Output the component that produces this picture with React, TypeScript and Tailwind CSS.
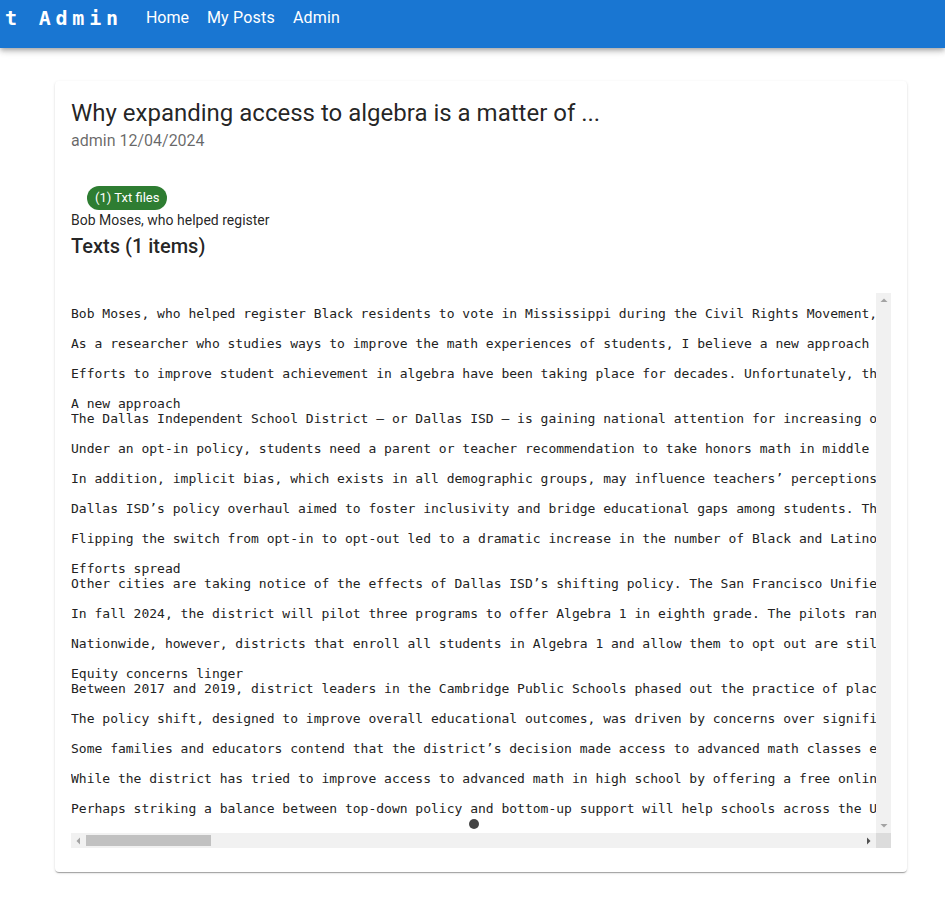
import React from "react";

const lines = [
  "Bob Moses, who helped register Black residents to vote in Mississippi during the Civil Rights Movement, believed civil rights went beyond the ballot. To him, math literacy was the new civil right.",
  "",
  "As a researcher who studies ways to improve the math experiences of students, I believe a new approach that makes algebra accessible to all students is needed.",
  "",
  "Efforts to improve student achievement in algebra have been taking place for decades. Unfortunately, the results have been mixed, and gaps persist for Black and Latino students.",
  "",
  "A new approach",
  "The Dallas Independent School District — or Dallas ISD — is gaining national attention for increasing opportunities for students to take Algebra 1 in middle school.",
  "",
  "Under an opt-in policy, students need a parent or teacher recommendation to take honors math in middle school, which often leads to fewer Black and Latino students enrolling.",
  "",
  "In addition, implicit bias, which exists in all demographic groups, may influence teachers’ perceptions of which students are ready for advanced coursework.",
  "",
  "Dallas ISD’s policy overhaul aimed to foster inclusivity and bridge educational gaps among students. The district automatically enrolls students who score well on state tests.",
  "",
  "Flipping the switch from opt-in to opt-out led to a dramatic increase in the number of Black and Latino students enrolled in advanced math classes.",
  "",
  "Efforts spread",
  "Other cities are taking notice of the effects of Dallas ISD’s shifting policy. The San Francisco Unified School District, for example, is reconsidering its approach to eighth grade algebra.",
  "",
  "In fall 2024, the district will pilot three programs to offer Algebra 1 in eighth grade. The pilots range from offering the course during the school day to summer sessions.",
  "",
  "Nationwide, however, districts that enroll all students in Algebra 1 and allow them to opt out are still relatively rare, and the results remain under study.",
  "",
  "Equity concerns linger",
  "Between 2017 and 2019, district leaders in the Cambridge Public Schools phased out the practice of placing students into different math classes based on perceived ability.",
  "",
  "The policy shift, designed to improve overall educational outcomes, was driven by concerns over significant racial disparities in who took advanced math in middle school.",
  "",
  "Some families and educators contend that the district’s decision made access to advanced math classes even more unequal, since families with resources turned to private tutoring.",
  "",
  "While the district has tried to improve access to advanced math in high school by offering a free online course, critics say the change has not gone far enough.",
  "",
  "Perhaps striking a balance between top-down policy and bottom-up support will help schools across the U.S. make algebra accessible to every student who wants to learn it.",
];

function Arrow({ dir, color }: { dir: "up" | "down" | "left" | "right"; color: string }) {
  const pts = {
    up: "4,1.5 7.5,5 0.5,5",
    down: "0.5,2 7.5,2 4,5.5",
    left: "5,0.5 5,7.5 1.5,4",
    right: "2,0.5 2,7.5 5.5,4",
  }[dir];
  return (
    <svg width="8" height="8" viewBox="0 0 8 8">
      <polygon points={pts} fill={color} />
    </svg>
  );
}

function NavBar() {
  return (
    <header className="h-12 bg-[#1976d2] text-white shadow-[0_2px_4px_-1px_rgba(0,0,0,0.2),0_4px_5px_0_rgba(0,0,0,0.14),0_1px_10px_0_rgba(0,0,0,0.12)]">
      <div className="flex items-start pt-[6px] pl-[5px]">
        <span className="font-['DejaVu_Sans_Mono',monospace] text-[20px] font-bold tracking-[0.3rem] leading-6 whitespace-pre mr-[24px]">
          t Admin
        </span>
        <nav className="flex font-['Roboto',sans-serif] text-[16px] leading-6">
          <span className="ml-[-1px] w-[61px]">Home</span>
          <span className="w-[86px] tracking-[0.2px]">My Posts</span>
          <span className="tracking-[0.2px]">Admin</span>
        </nav>
      </div>
    </header>
  );
}

function TextViewer() {
  return (
    <div className="mt-[31px] grid grid-cols-[805px_15px] grid-rows-[540px_15px]">
      <div className="overflow-hidden">
        <div className="w-[4990px]">
          <pre className="mt-[13px] font-['DejaVu_Sans_Mono',monospace] text-[13px] leading-[15px] text-[#222]">
            {lines.join("\n")}
          </pre>
          <div className="flex w-[805px] justify-center pt-[3px]">
            <span className="h-[10px] w-[10px] rounded-full bg-[#444]" />
          </div>
        </div>
      </div>
      {/* vertical scrollbar, nothing to scroll */}
      <div className="flex flex-col justify-between bg-[#f1f1f1]">
        <div className="flex h-[15px] items-center justify-center">
          <Arrow dir="up" color="#a3a3a3" />
        </div>
        <div className="flex h-[15px] items-center justify-center">
          <Arrow dir="down" color="#a3a3a3" />
        </div>
      </div>
      {/* horizontal scrollbar */}
      <div className="flex items-center bg-[#f1f1f1]">
        <div className="flex h-[15px] w-[15px] items-center justify-center">
          <Arrow dir="left" color="#a3a3a3" />
        </div>
        <div className="flex-1">
          <div className="h-[11px] w-[125px] bg-[#c1c1c1]" />
        </div>
        <div className="flex h-[15px] w-[15px] items-center justify-center">
          <Arrow dir="right" color="#505050" />
        </div>
      </div>
      <div className="bg-[#dcdcdc]" />
    </div>
  );
}

export default function App() {
  return (
    <div className="min-h-[917px] bg-white font-['Roboto',sans-serif] text-[rgba(0,0,0,0.87)]">
      <NavBar />
      <main className="pl-[55px] pr-[38px] pt-[33px] pb-[45px]">
        <div className="rounded bg-white shadow-[0_2px_1px_-1px_rgba(0,0,0,0.2),0_1px_1px_0_rgba(0,0,0,0.14),0_1px_3px_0_rgba(0,0,0,0.12)] p-4 pb-6">
          <h1 className="text-[24px] leading-8">Why expanding access to algebra is a matter of ...</h1>
          <p className="text-[16px] leading-6 text-[rgba(0,0,0,0.6)]">admin 12/04/2024</p>

          <div className="mt-[33px] ml-4 flex">
            <span className="flex h-6 items-center rounded-full bg-[#2e7d32] px-2 text-[13px] text-white">
              (1) Txt files
            </span>
          </div>
          <p className="text-[14px] leading-5">Bob Moses, who helped register</p>
          <h2 className="text-[20px] font-medium leading-8">Texts (1 items)</h2>

          <TextViewer />
        </div>
      </main>
    </div>
  );
}
